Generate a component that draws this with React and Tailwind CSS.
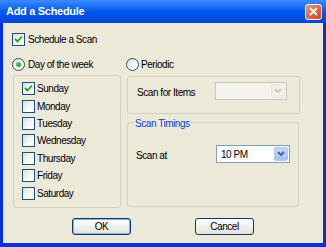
import React from "react";

const FONT = { fontFamily: '"Liberation Sans", Arial, sans-serif' };

function CheckBox({ checked = false }) {
    return (
        <span className="relative flex h-[13px] w-[13px] shrink-0 items-center justify-center border border-[#1C5180] bg-gradient-to-br from-[#DCDCD7] via-[#F5F5F3] to-white">
            {checked && (
                <svg width="9" height="9" viewBox="0 0 9 9">
                    <path d="M1 4 L3.5 6.5 L8 1.5" fill="none" stroke="#21A121" strokeWidth="1.8" />
                </svg>
            )}
        </span>
    );
}

function Radio({ checked = false }) {
    return (
        <span className="flex h-[13px] w-[13px] shrink-0 items-center justify-center rounded-full border border-[#1C5180] bg-gradient-to-br from-[#DCDCD7] via-[#F5F5F3] to-white">
            {checked && (
                <span className="h-[5px] w-[5px] rounded-full bg-gradient-to-br from-[#5CD35C] to-[#1E9A1E]" />
            )}
        </span>
    );
}

function Combo({ value, disabled = false }) {
    return (
        <div
            className={`flex h-[18px] items-stretch border ${
                disabled ? "border-[#C9C7BA] bg-[#F4F3EE]" : "border-[#7F9DB9] bg-white"
            }`}
        >
            <span className="flex flex-1 items-center pl-[4px] text-black">{value}</span>
            <span
                className={`m-[1px] flex w-[14px] items-center justify-center rounded-[2px] border ${
                    disabled
                        ? "border-[#E8E6DE] bg-[#F0EFEA]"
                        : "border-[#B4C8F6] bg-gradient-to-b from-[#C6D6FC] to-[#A8C0F4]"
                }`}
            >
                <svg width="8" height="6" viewBox="0 0 8 6">
                    <path
                        d="M1 1 L4 4 L7 1"
                        fill="none"
                        stroke={disabled ? "#C9C7BA" : "#4D6185"}
                        strokeWidth="1.8"
                    />
                </svg>
            </span>
        </div>
    );
}

function XpButton({ children, isDefault = false }) {
    return (
        <button
            className={`flex h-[17px] w-[59px] items-center justify-center rounded-[3px] border border-[#003C74] bg-gradient-to-b from-white to-[#E3E2DA] text-black ${
                isDefault ? "shadow-[inset_0_0_0_1px_#97AEE2]" : ""
            }`}
        >
            {children}
        </button>
    );
}

const DAYS = ["Sunday", "Monday", "Tuesday", "Wednesday", "Thursday", "Friday", "Saturday"];

export default function App() {
    return (
        <div
            className="flex h-[247px] w-[326px] flex-col overflow-hidden bg-[#0831D9]"
            style={FONT}
        >
            {/* title bar */}
            <div className="flex h-[23px] shrink-0 items-center justify-between bg-gradient-to-b from-[#3A8CFF] via-[#0058EE] to-[#0046D8] pl-[6px] pr-[4px]">
                <span className="text-[11px] font-bold tracking-[-0.3px] text-white">Add a Schedule</span>
                <span className="flex h-[16px] w-[17px] items-center justify-center rounded-[3px] border border-white bg-gradient-to-br from-[#F08A6C] to-[#D5401F]">
                    <svg width="9" height="9" viewBox="0 0 9 9">
                        <path d="M1 1 L8 8 M8 1 L1 8" stroke="white" strokeWidth="1.8" />
                    </svg>
                </span>
            </div>

            {/* body */}
            <div className="mx-[3px] mb-[4px] flex flex-1 flex-col bg-[#ECE9D8] text-[10px] tracking-[-0.45px] text-black">
                <div className="ml-[9px] mt-[10px] flex h-[13px] items-center gap-[3px]">
                    <CheckBox checked />
                    <span>Schedule a Scan</span>
                </div>

                <div className="ml-[9px] mt-[12px] flex">
                    {/* left column */}
                    <div className="flex w-[109px] flex-col">
                        <div className="flex h-[13px] items-center gap-[3px]">
                            <Radio checked />
                            <span>Day of the week</span>
                        </div>
                        <div className="ml-[1px] mt-[4px] flex h-[133px] w-[108px] flex-col rounded-[3px] border border-[#D0D0BF] pl-[8px] pt-[4px]">
                            {DAYS.map((d, i) => (
                                <div key={d} className="flex h-[17.4px] items-center gap-[2px]">
                                    <CheckBox checked={i === 0} />
                                    <span>{d}</span>
                                </div>
                            ))}
                        </div>
                    </div>

                    {/* right column */}
                    <div className="ml-[5px] flex flex-col">
                        <div className="flex h-[13px] items-center gap-[2px]">
                            <Radio />
                            <span>Periodic</span>
                        </div>
                        <div className="ml-[1px] mt-[5px] flex h-[38px] w-[173px] items-start rounded-[3px] border border-[#D0D0BF] pl-[9px] pt-[5px]">
                            <span className="mt-[3px] w-[78px]">Scan for Items</span>
                            <div className="w-[72px]">
                                <Combo value="" disabled />
                            </div>
                        </div>
                        <div className="relative ml-[1px] mt-[8px] flex h-[85px] w-[172px] rounded-[3px] border border-[#D0D0BF] pl-[8px] pt-[22px]">
                            <span className="absolute left-[6px] top-[-7px] bg-[#ECE9D8] px-[1px] text-[#0046D5]">
                                Scan Timings
                            </span>
                            <span className="mt-[3px] w-[80px]">Scan at</span>
                            <div className="w-[74px]">
                                <Combo value="10 PM" />
                            </div>
                        </div>
                    </div>
                </div>

                <div className="mt-[10px] flex">
                    <div className="ml-[69px]">
                        <XpButton isDefault>OK</XpButton>
                    </div>
                    <div className="ml-[64px]">
                        <XpButton>Cancel</XpButton>
                    </div>
                </div>
            </div>
        </div>
    );
}
